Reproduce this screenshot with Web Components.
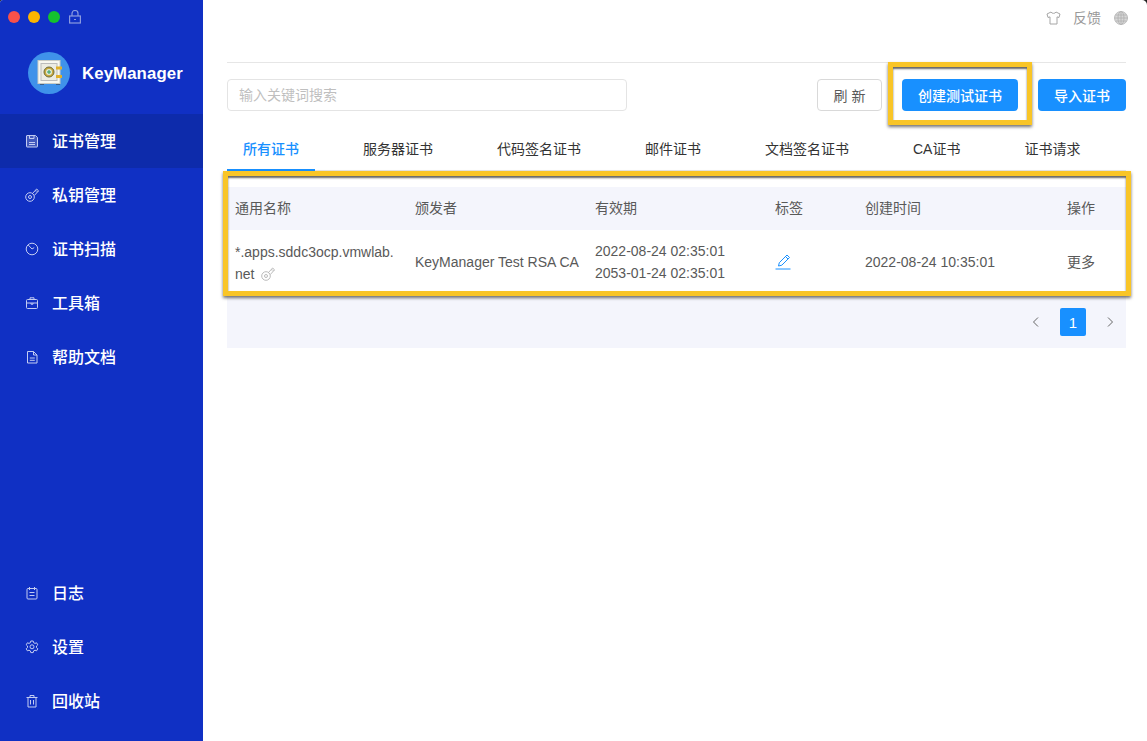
<!DOCTYPE html>
<html lang="zh"><head><meta charset="utf-8"><title>KeyManager</title>
<style>
html,body{margin:0;padding:0;height:100%;background:#222;overflow:hidden}
body{font:14px "Liberation Sans","Noto Sans CJK SC",sans-serif;color:#595959}
</style></head><body>
<km-app>
  <km-sidebar slot="side">
    <km-nav icon="save" active>证书管理</km-nav>
    <km-nav icon="key">私钥管理</km-nav>
    <km-nav icon="scan">证书扫描</km-nav>
    <km-nav icon="box">工具箱</km-nav>
    <km-nav icon="doc">帮助文档</km-nav>
    <km-nav icon="log" slot="bottom">日志</km-nav>
    <km-nav icon="gear" slot="bottom">设置</km-nav>
    <km-nav icon="trash" slot="bottom">回收站</km-nav>
  </km-sidebar>
  <km-topbar></km-topbar>
  <km-toolbar></km-toolbar>
  <km-tabs></km-tabs>
  <km-highlight class="tb"><km-table></km-table></km-highlight>
  <km-pagination></km-pagination>
</km-app>
<script>
const ICONS={
save:'<path d="M2 1.500h8.500l2 2v9a.5.5 0 0 1-.5.5H2a.5.5 0 0 1-.5-.5V2a.5.5 0 0 1 .5-.5z" fill="rgba(255,255,255,.22)"/><path d="M4.500 1.500v3h4.500v-3M4 8.500h6M4 10.500h6"/>',
key:'<circle cx="5" cy="9" r="4.300"/><circle cx="5" cy="9" r="1.500"/><path d="M7.400 5.600L11.600 1l2 1.800-4.300 4.700M10.200 2.600l1.300 1.300M11.800 2.600l.9.9"/>',
scan:'<circle cx="7" cy="7" r="5.800"/><path d="M3.300 3.100L7 7l2.200-1.400"/>',
box:'<rect x="1.500" y="3.500" width="11" height="9" rx="1"/><path d="M5 3.500V1.800h4v1.700M1.500 7h11M6 7v1.200h2V7"/>',
doc:'<path d="M2.500 1.500h6l3.500 3.500v8H2.500z"/><path d="M8.500 1.500V5H12M4.800 8h5M4.800 10.300h5"/>',
log:'<rect x="2" y="2.500" width="10" height="10.500" rx="1"/><path d="M4.500 1v3M9.500 1v3M4.500 6.500h5M4.500 9.500h5"/>',
gear:'<path d="M5.800 1h2.400l.4 1.700 1.400.7 1.600-.6 1.200 2-1.300 1.200v1.600l1.300 1.200-1.200 2-1.600-.6-1.400.7-.4 1.700H5.800l-.4-1.700-1.400-.7-1.600.6-1.200-2 1.300-1.200V6L1.200 4.800l1.200-2 1.600.6 1.400-.7z"/><circle cx="7" cy="6.800" r="2"/>',
trash:'<path d="M1.500 3.500h11M5 3.500V1.500h4v2M3 3.500V13h8V3.500M5.500 6v4.500M8.500 6v4.500"/>'
};
const def=(n,c)=>customElements.define(n,c);
const mk=(el,html)=>{el.attachShadow({mode:'open'}).innerHTML=html;};

def('km-app',class extends HTMLElement{constructor(){super();mk(this,`<style>
:host{display:flex;width:1147px;height:741px;overflow:hidden;background:#fff;border-radius:3px 5px 0 0}
main{flex:1;min-width:0;padding:0 21px 0 24px;display:flex;flex-direction:column}
</style><slot name="side"></slot><main><slot></slot></main>`);}});

def('km-sidebar',class extends HTMLElement{constructor(){super();mk(this,`<style>
:host{display:flex;flex-direction:column;width:203px;height:741px;flex:none;background:#1030c4;color:#fff}
.lights{height:34px;display:flex;align-items:center;gap:8px;padding-left:8px}
.lights i{width:12px;height:12px;border-radius:50%;display:block}
.lock{margin-left:1px;display:block}
.brand{height:80px;display:flex;align-items:center;padding-left:28px;box-sizing:border-box;padding-bottom:2px}
.brand b{margin:2px 0 0 12px;font:700 16.800px "Liberation Sans",sans-serif;letter-spacing:.1px}
.brand svg{display:block}
.sp{flex:1}
</style>
<div class="lights"><i style="background:#f8514b"></i><i style="background:#fdb502"></i><i style="background:#14c22e"></i>
<svg class="lock" width="12" height="14" viewBox="0 0 12 14" fill="none" stroke="#8b9be0" stroke-width="1.200"><rect x=".6" y="6" width="10.800" height="7"/><path d="M3 6V3.500a3 3 0 0 1 6 0V6M5 9.500h2"/></svg></div>
<div class="brand"><svg width="42" height="42" viewBox="0 0 42 42"><circle cx="21" cy="21" r="21" fill="#3f92ea"/>
<rect x="12" y="31" width="4" height="2" fill="#3a5f8c"/><rect x="28" y="31" width="4" height="2" fill="#3a5f8c"/>
<rect x="10" y="8.500" width="22" height="23" fill="#f7f7f0" stroke="#c9cbc4"/><rect x="13" y="11.500" width="16" height="17" fill="#ecece3" stroke="#bbb"/>
<circle cx="21" cy="20" r="5" fill="#c8a93c" stroke="#6d6a3a"/><circle cx="21" cy="20" r="3" fill="#dfe9da"/><path d="M21 18v4M19 20h4" stroke="#2c9a5a" stroke-width="1"/>
<rect x="28" y="14.500" width="6" height="3" fill="#e0b02a"/><rect x="28" y="23" width="6" height="3" fill="#e0b02a"/></svg><b>KeyManager</b></div>
<slot></slot><div class="sp"></div><slot name="bottom"></slot><div style="height:13px"></div>`);}});

def('km-nav',class extends HTMLElement{constructor(){super();const a=this.hasAttribute('active');mk(this,`<style>
:host{display:flex;align-items:center;height:54px;padding-left:25px;color:#fff;font-size:16px;font-weight:500;${a?'background:#0d2bab;':''}}
svg{flex:none;margin-right:13px;display:block}
span{display:block;margin-bottom:2px}
</style><svg width="14" height="14" viewBox="0 0 14 14" fill="none" stroke="#c3ccf2" stroke-width="1">${ICONS[this.getAttribute('icon')]}</svg><span><slot></slot></span>`);}});

def('km-topbar',class extends HTMLElement{constructor(){super();mk(this,`<style>
:host{display:block;height:63px;box-sizing:border-box;border-bottom:1px solid #e6e6e6;color:#999;position:relative}
svg{display:block}
.g{position:absolute;left:887px;top:11px}
.s{position:absolute;left:819px;top:11px}
span{position:absolute;left:846px;top:10px;line-height:16px}
</style>
<svg class="s" width="15" height="14" viewBox="0 0 15 14" fill="none" stroke="#a6a6a6" stroke-width="1"><path d="M5 1L1 3l1 3.500 2-.6V13h7V5.900l2 .6L14 3l-4-2c-.6 1.800-4.400 1.800-5 0z"/></svg>
<span>反馈</span>
<svg class="g" width="14" height="14" viewBox="0 0 14 14" fill="#d8d8d8" stroke="#b0b0b0" stroke-width=".8"><circle cx="7" cy="7" r="6.500"/><ellipse cx="7" cy="7" rx="3" ry="6.500"/><path d="M.5 7h13M1.500 4h11M1.500 10h11M7 .5v13"/></svg>`);}});

def('km-highlight',class extends HTMLElement{constructor(){super();mk(this,`<style>
:host{display:block;position:relative}
.f{position:absolute;box-sizing:border-box;border:5px solid #f9c527;pointer-events:none;
box-shadow:0 2px 3px rgba(0,0,0,.55),inset 0 2px 2px rgba(0,0,0,.6)}
:host(.tb) .f{left:-4px;right:-5px;top:0;bottom:-4px}
:host(.bt) .f{left:-14px;right:-14px;top:-17px;bottom:-14px}
:host(.bt){display:flex}
</style><slot></slot><div class="f"></div>`);}});

def('km-button',class extends HTMLElement{constructor(){super();const p=this.hasAttribute('primary');mk(this,`<style>
:host{display:flex;align-items:center;justify-content:center;box-sizing:border-box;height:32px;padding-bottom:1px;border-radius:4px;${p?'background:#1890ff;color:#fff;font-weight:500;':'border:1px solid #d9d9d9;color:#595959;background:#fff;'}}
</style><slot></slot>`);}});

def('km-toolbar',class extends HTMLElement{constructor(){super();mk(this,`<style>
:host{display:flex;align-items:center;gap:20px;margin-top:16px;height:32px}
.i{width:400px;height:32px;box-sizing:border-box;border:1px solid #e4e4e4;border-radius:4px;padding:0 0 2px 11px;display:flex;align-items:center;color:#bfbfbf;margin-right:auto}
</style><div class="i">输入关键词搜索</div>
<km-button style="width:65px">刷&nbsp;新</km-button>
<km-highlight class="bt"><km-button primary style="width:116px">创建测试证书</km-button></km-highlight>
<km-button primary style="width:88px">导入证书</km-button>`);}});

def('km-tabs',class extends HTMLElement{constructor(){super();mk(this,`<style>
:host{display:flex;gap:32px;margin-top:21px;height:39px;box-sizing:border-box;border-bottom:1px solid #e8e8e8;color:#333}
div{padding:0 16px;line-height:34px;height:39px;box-sizing:border-box}
.a{color:#1890ff;border-bottom:2px solid #1890ff;font-weight:500}
</style><div class="a">所有证书</div><div>服务器证书</div><div>代码签名证书</div><div>邮件证书</div><div>文档签名证书</div><div>CA证书</div><div>证书请求</div>`);}});

def('km-table',class extends HTMLElement{constructor(){super();mk(this,`<style>
:host{display:grid;grid-template-columns:180px 180px 180px 90px 202px 67px;padding-top:16px;color:#595959}
.h{background:#f4f5fc;height:43px;display:flex;align-items:center;padding:0 0 4px 8px;box-sizing:border-box}
.c{height:62px;display:flex;align-items:center;padding:1px 0 0 8px;line-height:22px;white-space:nowrap;box-sizing:border-box}
.c.n{padding-top:3px}
svg{display:inline-block;vertical-align:-2px}
</style>
<div class="h">通用名称</div><div class="h">颁发者</div><div class="h">有效期</div><div class="h">标签</div><div class="h">创建时间</div><div class="h">操作</div>
<div class="c n"><div>*.apps.sddc3ocp.vmwlab.<br>net <svg style="margin-left:3px" width="14" height="14" viewBox="0 0 14 14" fill="none" stroke="#b3b3b3" stroke-width=".9">${ICONS.key}</svg></div></div>
<div class="c">KeyManager Test RSA CA</div>
<div class="c"><div>2022-08-24 02:35:01<br>2053-01-24 02:35:01</div></div>
<div class="c"><svg width="16" height="16" viewBox="0 0 16 16" fill="none" stroke="#1890ff" stroke-width="1"><path d="M3.500 12l.8-3.300L12 1l2.500 2.500L6.800 11.200zM10.500 2.500L13 5"/><path d="M.5 15h15"/></svg></div>
<div class="c">2022-08-24 10:35:01</div>
<div class="c">更多</div>`);}});

def('km-pagination',class extends HTMLElement{constructor(){super();mk(this,`<style>
:host{display:flex;align-items:center;justify-content:flex-end;height:56px;background:#f4f5fc;padding:4px 10px 0 0;gap:18px;box-sizing:border-box;color:#fff}
svg{display:block}
b{width:26px;height:28px;background:#1890ff;border-radius:2px;display:flex;align-items:center;justify-content:center;font-weight:500;font-size:15px}
</style><svg width="12" height="12" viewBox="0 0 12 12" fill="none" stroke="#666" stroke-width="1"><path d="M8 1.500L3.500 6 8 10.500"/></svg><b>1</b><svg width="12" height="12" viewBox="0 0 12 12" fill="none" stroke="#666" stroke-width="1"><path d="M4 1.500L8.500 6 4 10.500"/></svg>`);}});
</script>
</body></html>
